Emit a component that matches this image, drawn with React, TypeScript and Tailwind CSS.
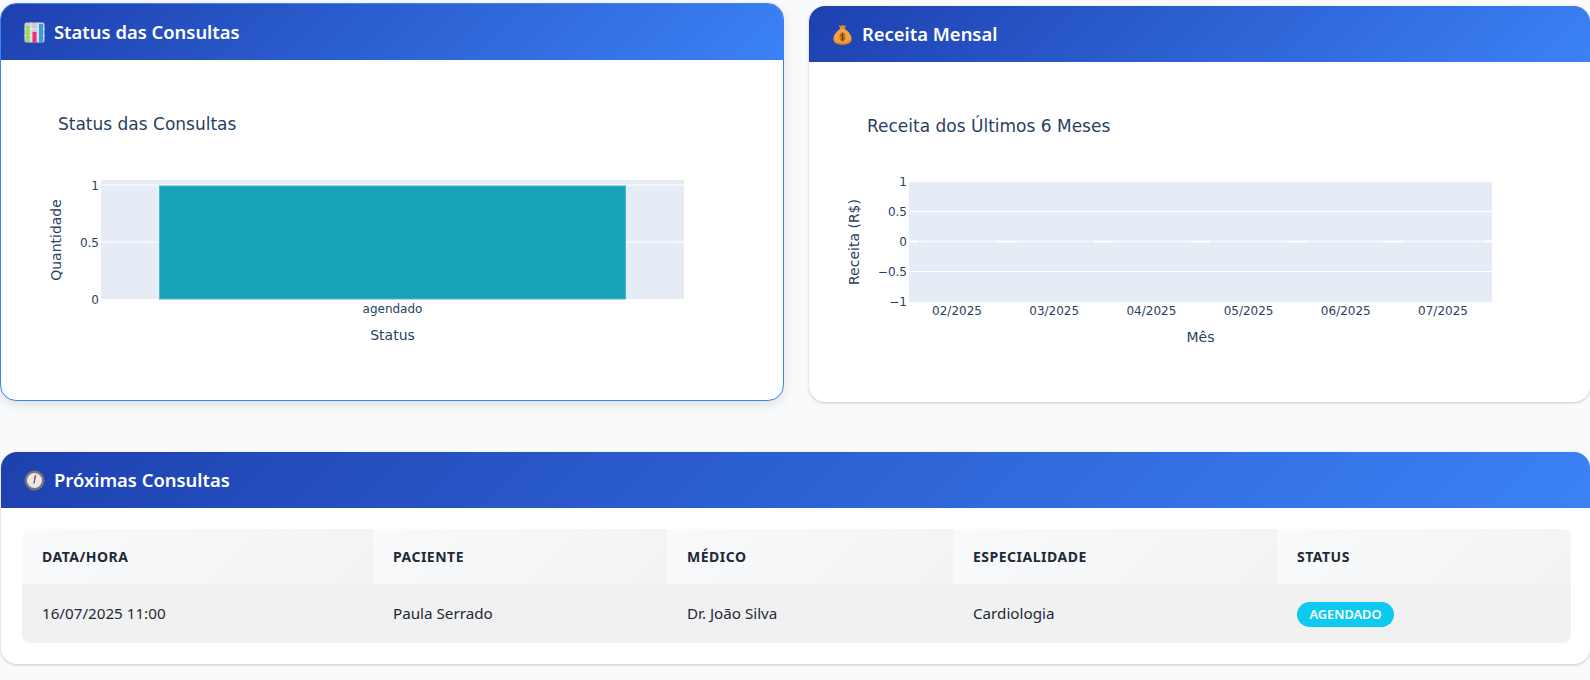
const plotFont = { fontFamily: '"DejaVu Sans", Verdana, sans-serif' };

function ChartEmoji() {
  return (
    <svg width="21" height="21" viewBox="0 0 21 21">
      <rect x="0.5" y="0.5" width="20" height="20" rx="2" fill="#cfcbd6" />
      <path d="M0.5 7h20M0.5 13.5h20M7 0.5v20M14 0.5v20" stroke="#eeeaf2" strokeWidth="1" />
      <rect x="2" y="4" width="3.5" height="16" fill="#8fe04e" />
      <rect x="8.5" y="10" width="4" height="10.5" fill="#ee2f72" />
      <rect x="15" y="2" width="4" height="18" fill="#2f9de8" />
    </svg>
  );
}

function BagEmoji() {
  return (
    <svg width="19" height="21" viewBox="0 0 19 21">
      <path d="M6 1l2 1.2L9.5 0.8 11 2.2 13 1l-1.2 4H7.2z" fill="#e8912c" />
      <path d="M7 5h5c3.5 2.5 6.5 6 6.5 10 0 4-3.5 5.5-9 5.5S.5 19 .5 15C.5 11 3.5 7.5 7 5z" fill="#f5a340" />
      <path d="M.8 14c0 4 3 6.5 8.7 6.5S18.2 18 18.2 14c-1 3-4 5-8.7 5S1.8 17 .8 14z" fill="#e07f24" />
      <ellipse cx="9.5" cy="13" rx="3.2" ry="4.8" fill="#d97a22" />
      <path d="M11 10.8c-.8-.9-3.2-.9-3.2.7 0 1.7 3.4 1 3.4 2.8 0 1.5-2.5 1.5-3.5.5M9.5 8.8v8.4" stroke="#7a3d12" strokeWidth="1" fill="none" />
    </svg>
  );
}

function ClockEmoji() {
  return (
    <svg width="21" height="21" viewBox="0 0 21 21">
      <circle cx="10.5" cy="10.5" r="10" fill="#78747a" />
      <circle cx="10.5" cy="10.5" r="7.5" fill="#ece8e4" />
      <path d="M10.5 10.5L11.8 5" stroke="#e8305f" strokeWidth="1.2" />
      <path d="M10.5 10.5L9.8 13.5" stroke="#5a5558" strokeWidth="1.2" />
      <path d="M10.5 10.5L10.5 6.5" stroke="#5a5558" strokeWidth="0.8" />
    </svg>
  );
}

function CardHeader({ icon, title }: { icon: React.ReactNode; title: string }) {
  return (
    <div className="h-[56px] flex items-center gap-[9px] pl-[23px] bg-[linear-gradient(135deg,#1e40af,#3b82f6)] text-white">
      <span className="w-[21px] flex justify-center shrink-0">{icon}</span>
      <h3 className="text-[18.4px] font-semibold">{title}</h3>
    </div>
  );
}

function StatusChart() {
  const tick = "fill-[#2a3f5f] text-[12px]";
  return (
    <svg width="782" height="340" viewBox="0 0 782 340" style={plotFont} className="block">
      <text x="57" y="70" className="fill-[#2a3f5f] text-[17px]">Status das Consultas</text>
      <rect x="100" y="120" width="583" height="119" fill="#e5ecf6" />
      <path d="M100 125h583M100 182h583" stroke="#fff" strokeWidth="1" />
      <rect x="158.5" y="126" width="466" height="113" fill="#17a2b8" stroke="#4fb8c8" strokeWidth="1" />
      <text x="98" y="130" textAnchor="end" className={tick}>1</text>
      <text x="98" y="187" textAnchor="end" className={tick}>0.5</text>
      <text x="98" y="244" textAnchor="end" className={tick}>0</text>
      <text x="391.5" y="253" textAnchor="middle" className={tick}>agendado</text>
      <text x="391.5" y="280" textAnchor="middle" className="fill-[#2a3f5f] text-[14px]">Status</text>
      <text transform="translate(60 180) rotate(-90)" textAnchor="middle" className="fill-[#2a3f5f] text-[14px]">Quantidade</text>
    </svg>
  );
}

const months = ["02/2025", "03/2025", "04/2025", "05/2025", "06/2025", "07/2025"];
const yTicks = [
  { label: "1", y: 186 },
  { label: "0.5", y: 216 },
  { label: "0", y: 246 },
  { label: "−0.5", y: 276 },
  { label: "−1", y: 306 },
];

function RevenueChart() {
  const tick = "fill-[#2a3f5f] text-[12px]";
  return (
    <svg width="781" height="340" viewBox="809 62 781 340" style={plotFont} className="block">
      <text x="867" y="132" className="fill-[#2a3f5f] text-[17px]">Receita dos Últimos 6 Meses</text>
      <rect x="909" y="182" width="583" height="120" fill="#e5ecf6" />
      <path d="M909 211.5h583M909 271.5h583" stroke="#fff" strokeWidth="1" />
      <path d="M909 241.5h583" stroke="#f2f5fa" strokeWidth="2" />
      {/* zeroline shows through only in the gaps between the flat bars */}
      <path d="M909 241.5h9M997 241.5h19M1094 241.5h19M1191 241.5h19M1288 241.5h19M1385 241.5h19M1483 241.5h9" stroke="#fff" strokeWidth="2" />
      {yTicks.map((t) => (
        <text key={t.label} x="907" y={t.y} textAnchor="end" className={tick}>{t.label}</text>
      ))}
      {months.map((m, i) => (
        <text key={m} x={957 + i * 97.2} y="315" textAnchor="middle" className={tick}>{m}</text>
      ))}
      <text x="1200.5" y="342" textAnchor="middle" className="fill-[#2a3f5f] text-[14px]">Mês</text>
      <text transform="translate(859 242) rotate(-90)" textAnchor="middle" className="fill-[#2a3f5f] text-[14px]">Receita (R$)</text>
    </svg>
  );
}

const columns = [
  { label: "DATA/HORA", value: "16/07/2025 11:00", width: "w-[351px]" },
  { label: "PACIENTE", value: "Paula Serrado", width: "w-[294px]" },
  { label: "MÉDICO", value: "Dr. João Silva", width: "w-[286px]" },
  { label: "ESPECIALIDADE", value: "Cardiologia", width: "w-[324px]" },
];

export default function App() {
  return (
    <div className="min-h-[680px] bg-[#f8fafc] pt-[6px] pl-px overflow-hidden font-['Noto_Sans','Open_Sans',sans-serif]">
      <div className="grid grid-cols-[783px_781px] gap-x-[25px] items-start">
        <div className="-translate-y-[3px] -ml-px bg-white rounded-[16px] border border-[#3b82f6] overflow-hidden shadow-[0_4px_12px_rgba(0,0,0,0.1)] h-[398px]">
          <CardHeader icon={<ChartEmoji />} title="Status das Consultas" />
          <StatusChart />
        </div>
        <div className="bg-white rounded-[16px] overflow-hidden shadow-[0_1px_3px_rgba(0,0,0,0.2)] h-[396px]">
          <CardHeader icon={<BagEmoji />} title="Receita Mensal" />
          <RevenueChart />
        </div>
      </div>
      <div className="mt-[48px] bg-white rounded-[16px] overflow-hidden shadow-[0_1px_3px_rgba(0,0,0,0.2)] h-[212px]">
        <CardHeader icon={<ClockEmoji />} title="Próximas Consultas" />
        <div className="pt-[21px] pl-[21px] pr-[19px]">
          <div className="rounded-[8px] overflow-hidden text-[15.2px] text-[#1f2937]">
            <div className="flex h-[55px]">
              {columns.map((c) => (
                <div key={c.label} className={`${c.width} bg-[linear-gradient(135deg,#f8fafc,#f1f3f5)] flex items-center pl-[20px] font-bold text-[14px] tracking-[0.5px] text-[#1f2937]`}>{c.label}</div>
              ))}
              <div className="flex-1 bg-[linear-gradient(135deg,#f8fafc,#f1f3f5)] flex items-center pl-[20px] font-bold text-[14px] tracking-[0.5px] text-[#1f2937]">STATUS</div>
            </div>
            <div className="flex h-[59px] bg-[#f1f1f2]">
              {columns.map((c) => (
                <div key={c.label} className={`${c.width} flex items-center pl-[20px]`}>{c.value}</div>
              ))}
              <div className="flex-1 flex items-center pl-[20px]">
                <span className="mt-[2px] h-[25px] w-[97px] rounded-full bg-[#0dcaf0] text-white text-[12.8px] font-semibold flex items-center justify-center">AGENDADO</span>
              </div>
            </div>
          </div>
        </div>
      </div>
    </div>
  );
}
